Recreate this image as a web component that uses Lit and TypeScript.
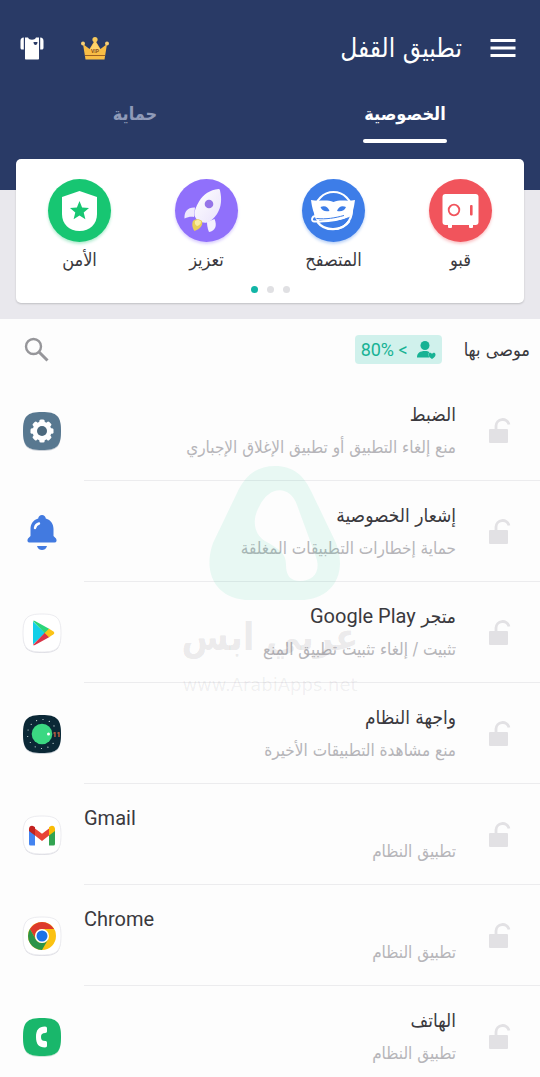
import { LitElement, html, svg, css, nothing, TemplateResult } from "lit";
import { customElement, state } from "lit/decorators.js";
import { classMap } from "lit/directives/class-map.js";

interface Shortcut {
  label: string;
  tone: string;
  icon: TemplateResult;
}

interface AppEntry {
  name?: string;
  latin?: string;
  note: string;
  icon: TemplateResult;
}

// Rounded "squircle" outline shared by launcher icons, on a 40x40 grid.
const squircle = "M20 1C35 1 39 5 39 20S35 39 20 39 1 35 1 20 5 1 20 1Z";

const plate = svg`
  <path d=${squircle} transform="translate(0 1)" fill="#d9d9e0" />
  <path d=${squircle} fill="#fff" stroke="#ececf0" stroke-width="1" />`;

const vaultIcon = html`<svg viewBox="0 0 63 63" aria-hidden="true">
  <rect x="13.500" y="15" width="36" height="31" rx="3" fill="#fff" />
  <rect x="19" y="44" width="4" height="5" rx="1" fill="#fff" />
  <rect x="40" y="44" width="4" height="5" rx="1" fill="#fff" />
  <circle cx="25" cy="31" r="5.300" fill="none" stroke="#f1545c" stroke-width="1.800" />
  <rect x="41" y="26" width="2.600" height="10.500" rx="1" fill="#f1545c" />
</svg>`;

const browserIcon = html`<svg viewBox="0 0 63 63" aria-hidden="true">
  <ellipse cx="31.500" cy="31.500" rx="18.500" ry="18.500" fill="none" stroke="#fff" stroke-width="2.200" />
  <path d="M9 21c8 2 15-1 22.500 2 7.500-3 14 0 21.500-2-1 7-2 14-6 17.500-9 3.500-21 4.500-31 2.500C11.500 36 10 28 9 21Z" fill="#fff" />
  <path d="M18.500 28c4-2 7.500-.500 9 4-4 1-7.500 0-9-4ZM44 28c-4-2-7.500-.500-9 4 4 1 7.500 0 9-4Z" fill="#3d7de8" />
  <path d="M15 43c12 1 23-.500 32-5-2 7-8 11-15.500 11S17.500 47 15 43Z" fill="#3d7de8" />
  <path d="M14 37c-4.500 0-5.500 5.500-1.500 5.500C24 43 38 41.500 47.500 36" fill="none" stroke="#fff" stroke-width="1.800" stroke-linecap="round" />
  <path d="M14.500 39.500C24 40.500 33 39 42 36.500" fill="none" stroke="#3d7de8" stroke-width="1" />
  <path d="M15.500 43c7 9.500 24 10 32-1" fill="none" stroke="#fff" stroke-width="2.200" />
</svg>`;

const rocketIcon = html`<svg viewBox="0 0 63 63" aria-hidden="true">
  <defs>
    <linearGradient id="hull" x1="0" y1="0" x2="1" y2="1">
      <stop offset="0" stop-color="#fff" />
      <stop offset="1" stop-color="#e9e2fb" />
    </linearGradient>
  </defs>
  <path d="M20 28.500c-7-.500-11 4-10.500 11 3.500-1.500 6-2 9.500-1.500Z" fill="#efe9fd" />
  <path d="M32 43c0 3 .500 6.500 2 10 6-1 8.500-6 5.500-13Z" fill="#f4f0fe" />
  <path d="M43.500 10c1 0 1.300.500 1.500 1.500C47 20 46.500 28 42 35c-3 4.500-6.500 7.500-10 8.500-5 1-11-2-12.500-7-.500-4 1.500-9 4.500-14 4.500-7.500 11-11.500 19.500-12.500Z" fill="url(#hull)" />
  <circle cx="34" cy="25" r="4.300" fill="#9574e8" />
  <path d="M18 42c2-2.500 6.500-2.500 9 0 1 4-1 7.500-7.500 10-2-2.500-3-7-1.500-10Z" fill="#e8cf58" />
  <path d="M20 42c2-1.500 4.500-1 6 .500 0 2.500-2 4-4 4.500-2-1-2.500-3-2-5Z" fill="#f8eca4" />
</svg>`;

const safetyIcon = html`<svg viewBox="0 0 63 63" aria-hidden="true">
  <path d="M31.500 12 49 18v17c0 10-7 17-17.500 17S14 45 14 35V18Z" fill="#fff" />
  <path d="m31.500 22 2.600 6.400 6.900.500-5.300 4.500 1.700 6.800-5.900-3.700-5.900 3.700 1.700-6.800-5.300-4.500 6.900-.500Z" fill="#17c672" />
</svg>`;

const settingsIcon = html`<svg viewBox="0 0 40 40" aria-hidden="true">
  <path d=${squircle} transform="translate(0 1)" fill="#ced3da" />
  <path d=${squircle} fill="#587890" />
  <g fill="#fff">
    <circle cx="20" cy="20" r="9.500" />
    ${[0, 45, 90, 135].map(
      (a) => svg`<rect x="17.300" y="8.500" width="5.400" height="23" rx="1.500" transform=${`rotate(${a} 20 20)`} />`,
    )}
  </g>
  <circle cx="20" cy="20" r="5" fill="#4c697e" />
</svg>`;

const bellIcon = html`<svg viewBox="0 0 40 40" aria-hidden="true">
  <path d="M20 3c2 0 3.500 1.500 3.800 3.500C29 8 31.500 12 31.500 17v7l2.500 2.500c1.200 2 .500 4-1.500 4h-25c-2 0-2.700-2-1.500-4L8.500 24v-7c0-5 2.500-9 7.700-10.500C16.500 4.500 18 3 20 3Z" fill="#427ae0" />
  <path d="M15 34h10c-1 3-3 4-5 4s-4-1-5-4Z" fill="#427ae0" />
  <path d="M13 16c.500-2.500 1.500-4 4-4.500" fill="none" stroke="#fff" stroke-width="2.400" stroke-linecap="round" />
</svg>`;

const playIcon = html`<svg viewBox="0 0 40 40" aria-hidden="true">
  ${plate}
  <path d="M11 8.500v23l12-11.500Z" fill="#13cfe8" />
  <path d="M11 8c.500-.500 1.300-.300 2 0l14.500 8L23 20.500Z" fill="#2bd579" />
  <path d="M11 32c.500.500 1.300.300 2 0l14.500-8L23 19.500Z" fill="#d93448" />
  <path d="m27 15.700 4.500 2.800c1 .800 1 2 0 2.800L27 24.200 22.700 20Z" fill="#fbc316" />
</svg>`;

const systemIcon = html`<svg viewBox="0 0 40 40" aria-hidden="true">
  <path d=${squircle} transform="translate(0 1)" fill="#ced3da" />
  <path d=${squircle} fill="#0b2836" />
  <g fill="#d7e6e4">
    ${Array.from({ length: 12 }, (_, i) => {
      const a = ((i * 26 + 40) * Math.PI) / 180;
      return svg`<circle cx=${(20 + 14.5 * Math.cos(a)).toFixed(1)} cy=${(20 + 14.5 * Math.sin(a)).toFixed(1)} r="0.600" />`;
    })}
  </g>
  <circle cx="20" cy="20" r="10.300" fill="#3bd882" />
  <circle cx="26.500" cy="20" r="1.500" fill="#fff" />
  <text x="30.500" y="22.800" direction="ltr" font-family="Roboto, sans-serif" font-size="7" font-weight="700" fill="#e07045">11</text>
</svg>`;

const gmailIcon = html`<svg viewBox="0 0 40 40" aria-hidden="true">
  ${plate}
  <path d="M7 13.500 13 18v12.500H8.500A1.500 1.500 0 0 1 7 29Z" fill="#4484f0" />
  <path d="M33 13.500 27 18v12.500h4.500A1.500 1.500 0 0 0 33 29Z" fill="#33a452" />
  <path d="m13 13.500 7 5.300 7-5.300v7L20 26l-7-5.500Z" fill="#e84336" />
  <path d="M7 14c0-3 3-4.200 5-2.500l1 .700v8.300L7 16Z" fill="#c3221f" />
  <path d="M33 14c0-3-3-4.200-5-2.500l-1 .700v8.300l6-4.500Z" fill="#fabc05" />
</svg>`;

const chromeIcon = html`<svg viewBox="0 0 40 40" aria-hidden="true">
  ${plate}
  <circle cx="20" cy="20" r="14" fill="#fbc211" />
  <path d="M7.900 13A14 14 0 0 1 32.100 13H20a7 7 0 0 0-6 10.500Z" fill="#dd3a2c" />
  <path d="M7.900 13A14 14 0 0 0 20 34l6.100-10.500a7 7 0 0 1-12.200 0Z" fill="#2c9447" />
  <circle cx="20" cy="20" r="7" fill="#fff" />
  <circle cx="20" cy="20" r="5.500" fill="#1c72e6" />
</svg>`;

const phoneIcon = html`<svg viewBox="0 0 40 40" aria-hidden="true">
  <path d=${squircle} transform="translate(0 1)" fill="#cfe6da" />
  <path d=${squircle} fill="#19b76b" />
  <path d="M23 9.500c1.500 0 2 .800 2 2v2.800c0 1.200-.600 1.700-1.800 1.700-2.700 0-4.200 1-4.200 4s1.500 4 4.200 4c1.200 0 1.800.500 1.800 1.700v2.800c0 1.200-.500 2-2 2-6.300 0-9-3.500-9-10.500s2.700-10.500 9-10.500Z" fill="#fff" />
</svg>`;

const openLock = html`<svg class="lock-icon" viewBox="0 0 24 26" aria-hidden="true">
  <rect x="1" y="12" width="19" height="14" rx="1" fill="#e2e1e4" />
  <path d="M8 13V9a6.600 6.600 0 0 1 13-1.500" fill="none" stroke="#e2e1e4" stroke-width="2.800" />
</svg>`;

@customElement("app-root")
export class AppRoot extends LitElement {
  @state() private tab = 0;

  private tabs = ["الخصوصية", "حماية"];

  private shortcuts: Shortcut[] = [
    { label: "قبو", tone: "red", icon: vaultIcon },
    { label: "المتصفح", tone: "blue", icon: browserIcon },
    { label: "تعزيز", tone: "violet", icon: rocketIcon },
    { label: "الأمن", tone: "green", icon: safetyIcon },
  ];

  private apps: AppEntry[] = [
    { name: "الضبط", note: "منع إلغاء التطبيق أو تطبيق الإغلاق الإجباري", icon: settingsIcon },
    { name: "إشعار الخصوصية", note: "حماية إخطارات التطبيقات المغلقة", icon: bellIcon },
    { name: "متجر ", latin: "Google Play", note: "تثبيت / إلغاء تثبيت تطبيق المنع", icon: playIcon },
    { name: "واجهة النظام", note: "منع مشاهدة التطبيقات الأخيرة", icon: systemIcon },
    { latin: "Gmail", note: "تطبيق النظام", icon: gmailIcon },
    { latin: "Chrome", note: "تطبيق النظام", icon: chromeIcon },
    { name: "الهاتف", note: "تطبيق النظام", icon: phoneIcon },
  ];

  static styles = css`
    :host {
      display: flex;
      flex-direction: column;
      height: 100vh;
      overflow: hidden;
      background: #fdfdfd;
      color: #3a393e;
      font-family: "DejaVu Sans Condensed", "DejaVu Sans", "Noto Sans", sans-serif;
    }
    * {
      box-sizing: border-box;
    }
    button {
      border: 0;
      padding: 0;
      background: none;
      color: inherit;
      font: inherit;
      cursor: pointer;
    }
    svg {
      display: block;
    }
    h1,
    h2,
    ul,
    p {
      margin: 0;
      padding: 0;
      font-weight: 400;
    }
    .latin {
      font-family: Roboto, sans-serif;
      font-size: 20px;
    }
    .header {
      flex: none;
      background: #293a66;
      color: #fff;
    }
    .bar {
      display: flex;
      align-items: center;
      height: 96px;
      padding: 0 20px;
    }
    .title {
      flex: 1;
      margin-inline-start: 26px;
      font-size: 26px;
      line-height: 40px;
    }
    .actions {
      display: flex;
      align-items: center;
      gap: 36px;
    }
    .menu-icon {
      width: 32px;
      height: 24px;
    }
    .crown {
      width: 30px;
      height: 24px;
    }
    .shirt {
      width: 24px;
      height: 24px;
    }
    .tabs {
      display: grid;
      grid-template-columns: 1fr 1fr;
      height: 63px;
      padding-bottom: 16px;
    }
    .tab {
      display: flex;
      flex-direction: column;
      align-items: center;
      justify-content: space-between;
      font-size: 18px;
      font-weight: 700;
      line-height: 36px;
      color: #8f9ab8;
    }
    .tab.on {
      color: #fff;
    }
    .tab.on::after {
      content: "";
      width: 84px;
      height: 4px;
      border-radius: 2px;
      background: #fff;
    }
    .tools {
      flex: none;
      padding: 0 16px 16px;
      background: linear-gradient(#293a66 31px, #e9e8ed 31px);
    }
    .card {
      padding: 20px 0 10px;
      border-radius: 5px;
      background: #fff;
      box-shadow: 0 1px 2px #0000002e;
    }
    .shortcuts {
      display: grid;
      grid-template-columns: repeat(4, 1fr);
      list-style: none;
    }
    .shortcut {
      display: flex;
      flex-direction: column;
      align-items: center;
      width: 100%;
      font-size: 18px;
      line-height: 36px;
    }
    .disc {
      width: 63px;
      height: 63px;
      border-radius: 50%;
    }
    .red {
      background: #f1545c;
      box-shadow: 0 2px 3px #f1545c55;
    }
    .blue {
      background: #3d7de8;
      box-shadow: 0 2px 3px #3d7de855;
    }
    .violet {
      background: #9070fb;
      box-shadow: 0 2px 3px #9070fb55;
    }
    .green {
      background: #17c672;
      box-shadow: 0 2px 3px #17c67255;
    }
    .dots {
      display: flex;
      justify-content: center;
      gap: 9px;
      padding-top: 8px;
    }
    .dot {
      width: 7px;
      height: 7px;
      border-radius: 50%;
      background: #e0e0e3;
    }
    .dot.on {
      background: #12b5a6;
    }
    .apps {
      position: relative;
      flex: 1;
      min-height: 0;
      overflow-y: auto;
      scrollbar-width: none;
    }
    .group {
      display: flex;
      align-items: center;
      gap: 22px;
      height: 61px;
      padding: 0 10px 0 22px;
    }
    .group-name {
      font-size: 18px;
      line-height: 32px;
    }
    .share {
      display: flex;
      align-items: center;
      gap: 8px;
      height: 29px;
      margin-inline-end: auto;
      padding: 0 6px;
      border-radius: 4px;
      background: #d0f1ec;
      color: #17b294;
    }
    .share .latin {
      font-size: 18px;
    }
    .person {
      width: 20px;
      height: 20px;
    }
    .search {
      width: 28px;
      height: 28px;
    }
    .list {
      list-style: none;
    }
    .row {
      display: flex;
      height: 101px;
    }
    .main {
      flex: 1;
      display: flex;
      border-bottom: 1px solid #ececee;
    }
    .lock {
      width: 80px;
      display: grid;
      place-items: center;
    }
    .lock-icon {
      width: 24px;
      height: 26px;
    }
    .texts {
      flex: 1;
      padding-top: 18px;
      padding-inline-start: 4px;
    }
    .name {
      font-size: 19px;
      line-height: 32px;
      text-align: start;
    }
    .note {
      font-size: 17px;
      line-height: 34px;
      color: #b6b5b9;
    }
    .launcher {
      width: 40px;
      margin: 31px 22px 30px;
    }
    .watermark {
      position: absolute;
      top: 146px;
      left: 50%;
      width: 190px;
      margin-left: -95px;
      pointer-events: none;
      text-align: center;
    }
    .mark {
      width: 132px;
      height: 136px;
      margin: 0 24px 0 auto;
    }
    .brand {
      font-size: 38px;
      font-weight: 700;
      line-height: 72px;
      color: #4c46501c;
    }
    .site {
      font-family: "DejaVu Sans", sans-serif;
      font-size: 18px;
      line-height: 24px;
      color: #4c465014;
    }
  `;

  render() {
    return html`
      <header class="header" dir="rtl" lang="ar">
        <div class="bar">
          <button aria-label="القائمة">
            <svg class="menu-icon" viewBox="0 0 32 24" aria-hidden="true">
              <path d="M2.500 4.500h25M2.500 12h25M2.500 19.500h25" stroke="#fff" stroke-width="2.800" />
            </svg>
          </button>
          <h1 class="title">تطبيق القفل</h1>
          <div class="actions">
            <button aria-label="VIP">
              <svg class="crown" viewBox="0 0 30 24" aria-hidden="true">
                <path d="m3 8 6.500 5L15 4l5.500 9L27 8l-2.500 15.500h-19Z" fill="#f9bd45" />
                <path d="M10 13.500 15 5l5 8.500-5 3Z" fill="#fdd36c" />
                <circle cx="15" cy="3.500" r="2.600" fill="#f7c95b" />
                <circle cx="3" cy="7.500" r="2" fill="#f9cf75" />
                <circle cx="27" cy="7.500" r="2" fill="#f9cf75" />
                <path d="M5 19.500h20" stroke="#9d6022" stroke-width="1" />
                <text x="15" y="17" text-anchor="middle" font-family="Roboto, sans-serif" font-size="5" font-weight="700" fill="#8a4b16">VIP</text>
              </svg>
            </button>
            <button aria-label="السمات">
              <svg class="shirt" viewBox="0 0 24 24" aria-hidden="true">
                <path d="M5 1.500h3c1 3 7 3 8 0h3v21c0 .600-.400 1-1 1H6c-.600 0-1-.400-1-1Z" fill="#fff" />
                <path d="M3.800 1.500v12H2c-.800 0-1.500-.700-1.500-1.500V5c0-2 1-3.500 3.300-3.500ZM20.200 1.500v12H22c.800 0 1.500-.700 1.500-1.500V5c0-2-1-3.500-3.300-3.500Z" fill="#fff" />
                <path d="M13.500 6h4c0 2-1 3-2 3s-2-1-2-3Z" fill="#293a66" />
              </svg>
            </button>
          </div>
        </div>
        <nav class="tabs">
          ${this.tabs.map(
            (label, i) => html`<button class=${classMap({ tab: true, on: i === this.tab })} @click=${() => (this.tab = i)}>
              ${label}
            </button>`,
          )}
        </nav>
      </header>

      <section class="tools" dir="rtl" lang="ar">
        <div class="card">
          <ul class="shortcuts">
            ${this.shortcuts.map(
              (s) => html`<li>
                <button class="shortcut"><span class="disc ${s.tone}">${s.icon}</span>${s.label}</button>
              </li>`,
            )}
          </ul>
          <div class="dots">
            <span class="dot"></span><span class="dot"></span><span class="dot on"></span>
          </div>
        </div>
      </section>

      <section class="apps" dir="rtl" lang="ar">
        <div class="group">
          <h2 class="group-name">موصى بها</h2>
          <button class="share">
            <svg class="person" viewBox="0 0 20 20" aria-hidden="true">
              <circle cx="9" cy="5.500" r="4.500" fill="#17b294" />
              <path d="M1 17.500C1 13 4 11 9 11c2 0 3.500.500 4.500 1-1.500 1.500-1.500 3.500 0 5.500Z" fill="#17b294" />
              <path d="M16 19c-2-1.500-3.500-2.500-3.500-4.300 0-2 2.500-2.500 3.500-.800 1-1.700 3.500-1.200 3.500.800 0 1.800-1.500 2.800-3.500 4.300Z" fill="#17b294" />
            </svg>
            <span class="latin" dir="ltr">80% &lt;</span>
          </button>
          <button aria-label="بحث">
            <svg class="search" viewBox="0 0 28 28" aria-hidden="true">
              <circle cx="11.500" cy="10.500" r="7.500" fill="none" stroke="#96969a" stroke-width="2.400" />
              <path d="m17 16 8.500 8.500" stroke="#96969a" stroke-width="3" />
            </svg>
          </button>
        </div>
        <ul class="list">
          ${this.apps.map(
            (app) => html`<li class="row">
              <div class="main">
                <button class="lock" aria-label="قفل ${app.name ?? ""}${app.latin ?? ""}">${openLock}</button>
                <div class="texts">
                  <p class="name" dir=${app.name ? "rtl" : "ltr"}>
                    ${app.name ?? nothing}${app.latin ? html`<span class="latin">${app.latin}</span>` : nothing}
                  </p>
                  <p class="note">${app.note}</p>
                </div>
              </div>
              <span class="launcher">${app.icon}</span>
            </li>`,
          )}
        </ul>
        <div class="watermark">
          <svg class="mark" viewBox="0 0 132 136" aria-hidden="true">
            <path fill-rule="evenodd" d="M66 1c18 0 29 9 37 27l24 50c12 31-4 57-36 57H41C8 135-7 109 4 78l24-50C36 10 48 1 66 1ZM50 42c-8 14-4 28 6 34 14 8 21 12 21 24 0 11 5 16 14 16 14 0 21-10 16-24L88 40c-7-20-28-20-38 2Z" fill="#18c48c" fill-opacity="0.090" />
          </svg>
          <p class="brand">عربي ابس</p>
          <p class="site" dir="ltr">www.ArabiApps.net</p>
        </div>
      </section>
    `;
  }
}
